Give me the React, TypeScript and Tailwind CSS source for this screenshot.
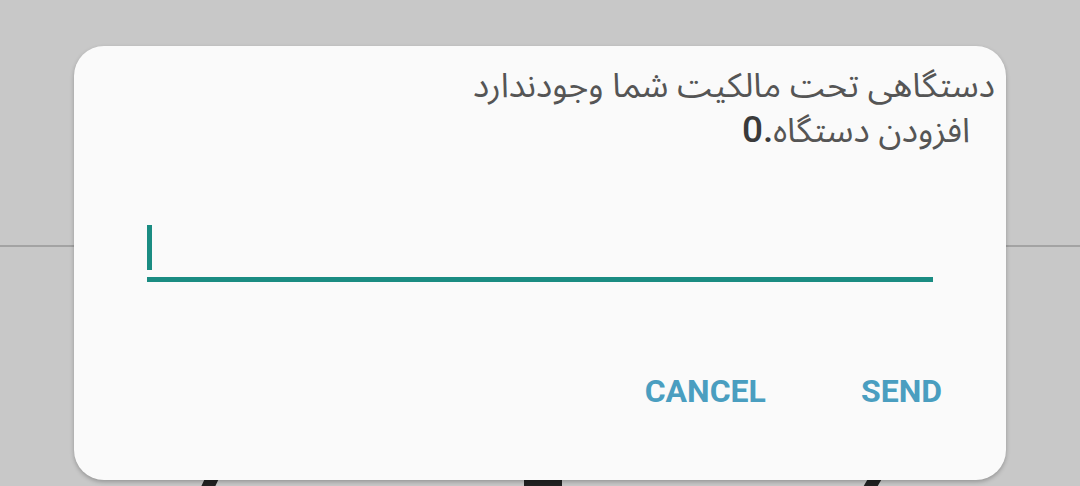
import React from "react";

export default function App() {
  return (
    <div className="relative w-[1080px] h-[486px] overflow-hidden bg-[#c8c8c8]">
      {/* background content */}
      <div className="pt-[245px]">
        <div className="h-[2px] bg-[#a3a3a3]" />
      </div>
      <div className="absolute left-[200px] top-[474px] w-[14px] h-[30px] bg-[#222] skew-x-[-25deg]" />
      <div className="absolute left-[524px] top-[480px] w-[38px] h-[20px] bg-[#222]" />
      <div className="absolute left-[862px] top-[474px] w-[14px] h-[30px] bg-[#222] skew-x-[-30deg]" />

      {/* dialog */}
      <div className="absolute left-[74px] top-[46px] w-[932px] h-[434px] rounded-[30px] bg-[#fafafa] shadow-[0_2px_4px_rgba(0,0,0,0.25)] flex flex-col">
        <div
          dir="rtl"
          className="pt-[18px] pr-[11px] text-[34px] leading-[44px] text-[#555555]"
          style={{ fontFamily: '"Noto Sans Arabic", "DejaVu Sans", sans-serif' }}
        >
          <div>دستگاهی تحت مالکیت شما وجودندارد</div>
          <div className="pr-[25px]">
            افزودن دستگاه
            <span className="text-[37px] font-medium text-[#3a3a3a]" style={{ fontFamily: "Roboto, sans-serif" }}>.0</span>
          </div>
        </div>
        <div className="mt-[72px] mx-[73px] h-[57px] border-b-[5px] border-[#1a8c82] flex items-start">
          <div className="w-[5px] h-[45px] bg-[#1a8c82]" />
        </div>
        <div
          className="mt-[93px] flex justify-end gap-[95px] pr-[64px] text-[32px] font-bold text-[#4a9ec0] leading-none"
          style={{ fontFamily: "Roboto, sans-serif" }}
        >
          <span>CANCEL</span>
          <span>SEND</span>
        </div>
      </div>
    </div>
  );
}
